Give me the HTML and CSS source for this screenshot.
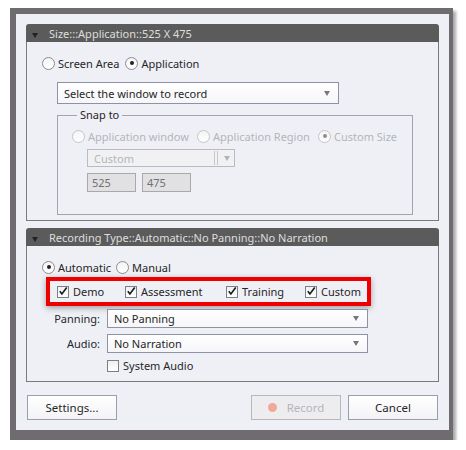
FILE: index.html
```html
<!DOCTYPE html>
<html>
<head>
<meta charset="utf-8">
<link rel="stylesheet" href="styles.css">
</head>
<body>
<div class="frame">
  <section class="panel p1">
    <div class="hdr"><span class="tri"></span>Size:::Application::525 X 475</div>
    <div class="body b1">
      <div class="row r-area">
        <span class="opt"><span class="radio"></span>Screen Area</span>
        <span class="opt"><span class="radio on"></span>Application</span>
      </div>
      <div class="select s-window"><span class="val">Select the window to record</span><span class="arrow"></span></div>
      <fieldset class="snap">
        <legend>Snap to</legend>
        <div class="row r-snap dis">
          <span class="opt o-appwin"><span class="radio"></span>Application window</span>
          <span class="opt o-appreg"><span class="radio"></span>Application Region</span>
          <span class="opt"><span class="radio on"></span>Custom Size</span>
        </div>
        <div class="select s-custom dis"><span class="val">Custom</span><span class="sep"></span><span class="arrow"></span></div>
        <div class="row r-nums">
          <span class="num">525</span><span class="num">475</span>
        </div>
      </fieldset>
    </div>
  </section>

  <section class="panel p2">
    <div class="hdr"><span class="tri"></span>Recording Type::Automatic::No Panning::No Narration</div>
    <div class="body b2">
      <div class="row r-mode">
        <span class="opt o-auto"><span class="radio on"></span>Automatic</span>
        <span class="opt"><span class="radio"></span>Manual</span>
      </div>
      <div class="redbox">
        <span class="chk c-demo"><span class="box on"><svg viewBox="0 0 11 11"><path d="M2 5.2 L4.3 8.2 L9.6 1.2" /></svg></span>Demo</span>
        <span class="chk c-assess"><span class="box on"><svg viewBox="0 0 11 11"><path d="M2 5.2 L4.3 8.2 L9.6 1.2" /></svg></span>Assessment</span>
        <span class="chk c-train"><span class="box on"><svg viewBox="0 0 11 11"><path d="M2 5.2 L4.3 8.2 L9.6 1.2" /></svg></span>Training</span>
        <span class="chk"><span class="box on"><svg viewBox="0 0 11 11"><path d="M2 5.2 L4.3 8.2 L9.6 1.2" /></svg></span>Custom</span>
      </div>
      <div class="row field f-pan">
        <span class="lbl">Panning:</span>
        <div class="select s-field"><span class="val">No Panning</span><span class="arrow"></span></div>
      </div>
      <div class="row field f-audio">
        <span class="lbl">Audio:</span>
        <div class="select s-field"><span class="val">No Narration</span><span class="arrow"></span></div>
      </div>
      <div class="row r-sys">
        <span class="chk"><span class="box"></span>System Audio</span>
      </div>
    </div>
  </section>

  <div class="buttons">
    <span class="btn b-settings">Settings...</span>
    <span class="spacer"></span>
    <span class="btn b-record dis"><span class="dot"></span>Record</span>
    <span class="btn b-cancel">Cancel</span>
  </div>
</div>
</body>
</html>
```

FILE: styles.css
```css
* { box-sizing: border-box; }
html, body { margin: 0; padding: 0; background: #ffffff; }
body {
  font-family: "Noto Sans", "Open Sans", sans-serif;
  font-size: 11px;
  color: #262626;
}
.frame {
  margin: 8px 0 0 10px;
  width: 443px;
  height: 432px;
  border-style: solid;
  border-color: #6f6b70;
  border-width: 6px 4px 10px 6px;
  background: #eff0f6;
  box-shadow: 3px 3px 3px rgba(0,0,0,0.35);
  padding: 10px 10px 0 10px;
  display: flex;
  flex-direction: column;
}
.panel {
  width: 413px;
  display: flex;
  flex-direction: column;
}
.p2 { margin-top: 7px; }
.hdr {
  height: 18px;
  background: #5b5b5b;
  color: #dedede;
  border-radius: 3px 3px 0 0;
  display: flex;
  align-items: center;
  padding-left: 6px;
  font-size: 11px;
  white-space: nowrap;
}
.tri {
  width: 0; height: 0;
  border-left: 3.5px solid transparent;
  border-right: 3.5px solid transparent;
  border-top: 5px solid #222;
  margin-right: 11px;
  margin-top: 4px;
}
.body {
  border: 1px solid #7a7a7a;
  border-top: none;
  display: flex;
  flex-direction: column;
  align-items: flex-start;
}
.b1 { height: 179px; padding: 13px 0 0 15px; }
.b2 { height: 136px; padding: 13px 0 0 15px; }
.row { display: flex; align-items: center; white-space: nowrap; }
.opt { display: flex; align-items: center; height: 16px; margin-right: 6px; }
.o-auto { margin-right: 5px; }
.radio {
  width: 13px; height: 13px;
  border: 1px solid #8b8b8f;
  border-radius: 50%;
  background: linear-gradient(#f4f4f6, #ffffff);
  margin-right: 3px;
  display: flex; align-items: center; justify-content: center;
}
.radio.on::after {
  content: "";
  width: 4px; height: 4px;
  border-radius: 50%;
  background: #222;
}
.dis { color: #b4b5ba; }
.dis .radio { border-color: #c4c5ca; }
.dis .radio.on::after { background: #8e8e92; }

.select {
  border: 1px solid #8e92a6;
  background: linear-gradient(#ffffff, #f6f6f9);
  display: flex;
  align-items: center;
  padding-left: 6px;
  padding-right: 8px;
}
.select .val { flex: 1; white-space: nowrap; }
.arrow {
  width: 0; height: 0;
  border-left: 3.5px solid transparent;
  border-right: 3.5px solid transparent;
  border-top: 5px solid #76767e;
}
.s-window { margin: 11px 0 0 15px; width: 282px; height: 22px; }
.snap {
  margin: 3px 0 0 15px;
  width: 356px;
  height: 108px;
  border: 1px solid #a2a4ae;
  padding: 5px 0 0 14px;
  display: flex;
  flex-direction: column;
  align-items: flex-start;
}
.snap legend { padding: 0 3px 0 3px; margin-left: 5px; line-height: 16px; color: #262626; }
.o-appwin { width: 125px; margin-right: 0; }
.o-appreg { width: 121px; margin-right: 0; }
.s-custom {
  margin: 5px 0 0 15px; width: 148px; height: 18px;
  border-color: #b9bac2; background: #f1f1f3; padding-right: 4px;
}
.s-custom .sep { width: 4px; height: 14px; border-left: 1px solid #c8c8cc; border-right: 1px solid #c8c8cc; margin-right: 6px; }
.s-custom .arrow { border-top-color: #b2b2b8; }
.r-nums { margin: 6px 0 0 15px; gap: 6px; }
.num {
  width: 49px; height: 19px;
  border: 1px solid #a9a9ab;
  background: #e1e1e3;
  color: #707070;
  padding-left: 4px;
  display: flex; align-items: center;
}

.redbox {
  margin: 2px 0 0 4px;
  width: 325px; height: 29px;
  border: 4px solid #ee0000;
  box-shadow: 0 2px 6px rgba(0,0,0,0.35);
  display: flex;
  align-items: center;
  padding-left: 7px;
  white-space: nowrap;
}
.chk { display: flex; align-items: center; }
.box {
  width: 12px; height: 12px;
  border: 1px solid #7d7f88;
  background: linear-gradient(#f0f0f3, #ffffff);
  margin-right: 4px;
  display: flex;
}
.box svg { width: 11px; height: 11px; margin: -1px 0 0 0; }
.box svg path { fill: none; stroke: #1b1b1b; stroke-width: 1.8; }
.c-demo { width: 68px; }
.c-assess { width: 101px; }
.c-train { width: 79px; }

.field { margin-top: 3px; }
.f-audio { margin-top: 6px; }
.lbl { width: 65px; text-align: right; padding-right: 7px; }
.s-field { width: 261px; height: 19px; }
.r-sys { margin: 5px 0 0 65px; }

.buttons {
  margin-top: 13px;
  display: flex;
  padding-left: 1px;
}
.spacer { flex: 1; }
.btn {
  width: 90px; height: 25px;
  border: 1px solid #9a9db2;
  background: linear-gradient(#ffffff, #f3f3f6);
  display: flex; align-items: center; justify-content: center;
  font-size: 11.5px;
}
.b-record { border-color: #b8b8ba; background: #ededf0; margin-right: 7px; }
.b-record .dot { width: 9px; height: 9px; border-radius: 50%; background: #f1a899; margin-right: 10px; }
.b-cancel { margin-right: 1px; }
```
